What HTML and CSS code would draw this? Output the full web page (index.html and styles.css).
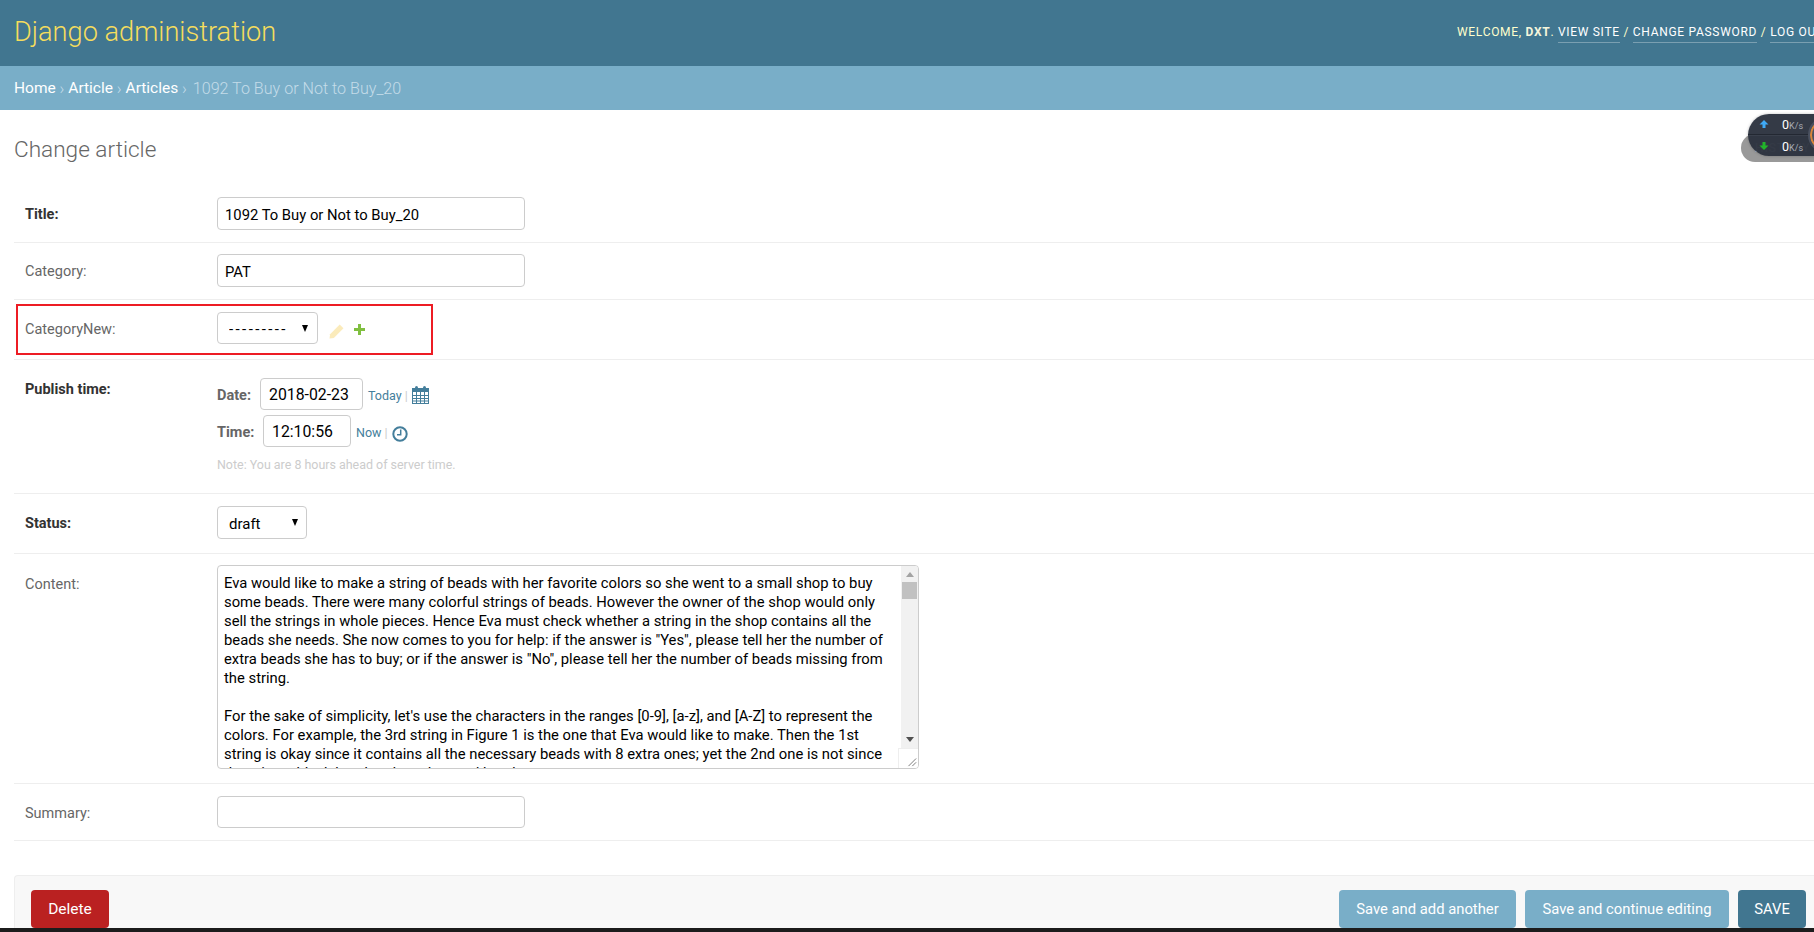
FILE: index.html
```html
<!DOCTYPE html>
<html lang="en">
<head>
<meta charset="utf-8">
<title>Change article</title>
<link rel="stylesheet" href="styles.css">
</head>
<body>
<div class="page">
  <div class="viewport">
    <header class="header">
      <div class="branding">Django administration</div>
      <div class="user-tools">Welcome, <strong>dxt</strong>. <a href="#">View site</a> / <a href="#">Change password</a> / <a href="#">Log out</a></div>
    </header>
    <nav class="breadcrumbs"><a href="#">Home</a> › <a href="#">Article</a> › <a href="#">Articles</a> › <span class="crumb-current">1092 To Buy or Not to Buy_20</span></nav>
    <main class="content">
      <h1 class="page-title">Change article</h1>
      <a class="history" href="#">History</a>
      <div class="speed">
        <div class="speed-row"><svg class="arrow" viewBox="0 0 10 10"><path d="M5 1 9.5 5.5H6.5V9h-3V5.5H.5z" fill="#3fa9f5"/></svg><span class="speed-val"><b>0</b>K/s</span></div>
        <div class="speed-row speed-row-low"><svg class="arrow" viewBox="0 0 10 10"><path d="M5 9 9.5 4.5H6.5V1h-3v3.5H.5z" fill="#22b52a"/></svg><span class="speed-val"><b>0</b>K/s</span></div>
        <div class="speed-ring"></div>
      </div>
      <form class="form">
        <div class="row row-title">
          <label class="label required">Title:</label>
          <input class="field" type="text" value="1092 To Buy or Not to Buy_20">
        </div>
        <div class="row">
          <label class="label">Category:</label>
          <input class="field" type="text" value="PAT">
        </div>
        <div class="row row-cat">
          <label class="label">CategoryNew:</label>
          <span class="select-wrap select-cat"><select class="select"><option>---------</option></select></span>
          <svg class="icon-pencil" viewBox="0 0 14 14"><path d="M10 .5 13.5 4 4.5 13 .5 13.5 1 9.5z" fill="#efb80b" opacity=".28"/></svg>
          <svg class="icon-plus" viewBox="0 0 11 11"><path d="M4 0h3v4h4v3H7v4H4V7H0V4h4z" fill="#80bf40"/></svg>
          <div class="red-box"></div>
        </div>
        <div class="row row-publish">
          <label class="label required">Publish time:</label>
          <div class="datetime">
            <div class="dt-line dt-date">
              <span class="dt-label">Date:</span>
              <input class="dt-input dt-input-date" type="text" value="2018-02-23">
              <span class="dt-short"><a href="#">Today</a> |</span>
              <svg class="icon-cal" viewBox="0 0 17 18"><rect x=".5" y="2.5" width="16" height="15" fill="none" stroke="#447e9b"/><rect x="0" y="2" width="17" height="4" fill="#447e9b"/><path d="M0 9.5h17M0 12.5h17M0 15h17M4.5 6v12M8.5 6v12M12.5 6v12" stroke="#447e9b" fill="none"/><rect x="3" y="0" width="3" height="4" rx="1.5" fill="#447e9b"/><rect x="11" y="0" width="3" height="4" rx="1.5" fill="#447e9b"/></svg>
            </div>
            <div class="dt-line dt-time">
              <span class="dt-label">Time:</span>
              <input class="dt-input dt-input-time" type="text" value="12:10:56">
              <span class="dt-short"><a href="#">Now</a> |</span>
              <svg class="icon-clock" viewBox="0 0 16 16"><circle cx="8" cy="8" r="6.7" fill="none" stroke="#447e9b" stroke-width="2"/><path d="M8.7 3.5v5.2H5" fill="none" stroke="#447e9b" stroke-width="1.5"/></svg>
            </div>
            <div class="note">Note: You are 8 hours ahead of server time.</div>
          </div>
        </div>
        <div class="row row-status">
          <label class="label required">Status:</label>
          <span class="select-wrap select-status"><select class="select"><option>draft</option></select></span>
        </div>
        <div class="row row-content">
          <label class="label">Content:</label>
          <div class="area-wrap">
            <textarea class="area" readonly>Eva would like to make a string of beads with her favorite colors so she went to a small shop to buy some beads. There were many colorful strings of beads. However the owner of the shop would only sell the strings in whole pieces. Hence Eva must check whether a string in the shop contains all the beads she needs. She now comes to you for help: if the answer is "Yes", please tell her the number of extra beads she has to buy; or if the answer is "No", please tell her the number of beads missing from the string.

For the sake of simplicity, let's use the characters in the ranges [0-9], [a-z], and [A-Z] to represent the colors. For example, the 3rd string in Figure 1 is the one that Eva would like to make. Then the 1st string is okay since it contains all the necessary beads with 8 extra ones; yet the 2nd one is not since there is no black bead and one less red bead.</textarea>
            <div class="scrollbar">
              <span class="sb-up"></span>
              <span class="sb-thumb"></span>
              <span class="sb-down"></span>
            </div>
            <svg class="resizer" viewBox="0 0 20 20"><path d="M18 10 10 18M18 14 14 18" stroke="#777" fill="none"/></svg>
          </div>
        </div>
        <div class="row row-summary">
          <label class="label">Summary:</label>
          <input class="field field-summary" type="text">
        </div>
        <div class="submit-row">
          <a class="btn btn-delete" href="#">Delete</a>
          <div class="spacer"></div>
          <a class="btn btn-light" href="#">Save and add another</a>
          <a class="btn btn-light" href="#">Save and continue editing</a>
          <a class="btn btn-dark" href="#">SAVE</a>
        </div>
      </form>
    </main>
  </div>
  <div class="taskbar"></div>
</div>
</body>
</html>
```
FILE: styles.css
```css
* { box-sizing: border-box; }
html, body { margin: 0; padding: 0; height: 100%; overflow: hidden; background: #fff; }
body { font-family: Roboto, "Liberation Sans", sans-serif; font-size: 14px; color: #333; }
a { text-decoration: none; }

.page { height: 100vh; display: flex; flex-direction: column; }
.viewport { flex: 1; min-height: 0; overflow: hidden; position: relative; }
.taskbar { height: 4px; background: #1c1c1c; flex: none; }

.header { height: 66px; background: #417690; display: flex; align-items: center; padding-left: 14px; justify-content: space-between; }
.branding { font-size: 27.2px; font-weight: 300; color: #f5dd5d; white-space: nowrap; margin-top: -3px; }
.user-tools { flex: 0 0 357px; overflow: hidden; white-space: nowrap; font-size: 12px; font-weight: 400; letter-spacing: .7px; text-transform: uppercase; color: #ffc; margin-top: -1px; padding-bottom: 2px; line-height: 18px; }
.user-tools strong { font-weight: 700; color: #f5f5dc; }
.user-tools a { color: #fff; border-bottom: 1px solid rgba(255,255,255,.3); padding-bottom: 3px; }

.breadcrumbs { height: 44px; background: #79aec8; padding-left: 14px; display: flex; align-items: center; white-space: pre; font-size: 16px; font-weight: 300; color: #c4dce8; }
.breadcrumbs a { color: #fff; font-weight: 400; font-size: 15.5px; }
.crumb-current { margin-left: 2px; font-size: 16.1px; }

.content { position: relative; padding-left: 14px; }
.page-title { margin: 0; padding-top: 26px; font-size: 22.6px; font-weight: 300; color: #666; line-height: 28px; height: 76px; }

.history { position: absolute; left: 1741px; top: 24px; width: 120px; height: 28px; border-radius: 14px; background: #999; color: #fff; font-size: 12px; letter-spacing: 1px; text-transform: uppercase; line-height: 28px; padding-left: 14px; }
.speed { position: absolute; left: 1748px; top: 4px; width: 120px; height: 42px; border-radius: 21px; background: rgba(44,50,62,.96); box-shadow: 0 0 3px rgba(0,0,0,.25); }
.speed-row { height: 21px; display: flex; align-items: center; padding-left: 11px; border-bottom: 1px solid #232832; }
.speed-row-low { border-bottom: 0; border-top: 1px solid #3a404c; }
.arrow { width: 10px; height: 10px; flex: none; }
.speed-val { margin-left: 13px; width: 21px; flex: none; white-space: nowrap; font-size: 9px; color: #a8adb5; }
.speed-val b { font-size: 12.5px; font-weight: 400; color: #fff; }
.speed-ring { position: absolute; left: 60px; top: 3px; width: 36px; height: 36px; border-radius: 50%; background: #4a5160; border: 2px solid #4a5160; box-shadow: inset 0 0 0 2px #d9853a; }

.form { display: block; }
.row { position: relative; display: flex; align-items: flex-start; padding: 11px 10px 12px 11px; border-bottom: 1px solid #eee; }
.label { flex: 0 0 192px; font-size: 14.5px; color: #666; padding-top: 10px; line-height: 16px; }
.required { font-weight: 700; color: #333; }

.field { width: 308px; height: 33px; border: 1px solid #ccc; border-radius: 4px; padding: 6px 7px 4px; font: 14.8px Roboto, "Liberation Sans", sans-serif; color: #000; background: #fff; }
.field-summary { height: 32px; }

.row-cat { padding: 12px 10px 15px 11px; align-items: flex-start; }
.select-wrap { position: relative; display: block; height: 32px; }
.select-wrap::after { content: ""; position: absolute; top: 13px; border-left: 3.5px solid transparent; border-right: 3.5px solid transparent; border-top: 7px solid #000; pointer-events: none; }
.select { display: block; width: 100%; height: 100%; appearance: none; -webkit-appearance: none; border: 1px solid #ccc; border-radius: 4px; background: #fff; font: 15px Roboto, "Liberation Sans", sans-serif; color: #000; padding: 2px 11px 0; }
.select-cat { width: 101px; }
.select-cat .select { letter-spacing: 2.4px; }
.select-cat::after { right: 10px; }
.select-status { width: 90px; height: 33px; }
.select-status::after { right: 9px; }
.icon-pencil { width: 15px; height: 15px; margin: 12px 0 0 11px; flex: none; }
.icon-plus { width: 11px; height: 11px; margin: 12px 0 0 10px; flex: none; }
.red-box { position: absolute; left: 2px; top: 4px; width: 417px; height: 51px; border: 2px solid #ed1c24; pointer-events: none; }

.row-publish { padding: 18px 10px 21px 11px; }
.row-publish .label { padding-top: 4px; }
.datetime { display: flex; flex-direction: column; }
.dt-line { display: flex; align-items: center; height: 32px; }
.dt-time { margin-top: 5px; }
.dt-label { font-weight: 700; color: #666; font-size: 14.5px; flex: none; padding-top: 2px; }
.dt-date .dt-label { width: 43px; }
.dt-time .dt-label { width: 46px; }
.dt-input { height: 32px; border: 1px solid #ccc; border-radius: 4px; padding: 5px 8px; font: 15.8px Roboto, "Liberation Sans", sans-serif; color: #000; background: #fff; }
.dt-input-date { width: 103px; }
.dt-input-time { width: 88px; }
.dt-short { margin-left: 5px; font-size: 12.5px; color: #ccc; white-space: pre; padding-top: 2px; }
.dt-short a { color: #447e9b; }
.icon-cal { width: 17px; height: 18px; margin-left: 4px; flex: none; margin-top: 2px; }
.icon-clock { width: 16px; height: 16px; margin-left: 4px; flex: none; margin-top: 5px; }
.note { margin-top: 11px; font-size: 12.45px; font-weight: 400; color: #ccc; line-height: 14px; }

.row-status { padding: 12px 10px 14px 11px; }
.row-content { padding-bottom: 14px; }
.row-content .label { padding-top: 12px; }
.row-summary { padding: 12px 10px 12px 11px; }

.area-wrap { position: relative; width: 702px; height: 204px; }
.area { display: block; width: 100%; height: 100%; resize: none; overflow: hidden; border: 1px solid #ccc; border-radius: 4px; padding: 8px 27px 0 6px; font: 14.8px/19px Roboto, "Liberation Sans", sans-serif; color: #000; background: #fff; outline: 0; }
.scrollbar { position: absolute; right: 1px; top: 1px; bottom: 21px; width: 17px; background: #f1f1f1; display: flex; flex-direction: column; align-items: center; border-top-right-radius: 3px; }
.sb-up, .sb-down { width: 0; height: 0; border-left: 4.5px solid transparent; border-right: 4.5px solid transparent; }
.sb-up { border-bottom: 5px solid #a3a3a3; margin-top: 6px; }
.sb-thumb { width: 15px; height: 17px; background: #c1c1c1; margin-top: 5px; }
.sb-down { border-top: 5px solid #505050; margin-top: auto; margin-bottom: 6px; }
.resizer { position: absolute; right: 1px; bottom: 1px; width: 20px; height: 20px; background: #fff; border-left: 1px solid #eee; border-top: 1px solid #eee; border-bottom-right-radius: 3px; }

.submit-row { margin-top: 34px; height: 70px; display: flex; align-items: flex-start; padding: 14px 8px 0 16px; background: #f8f8f8; border: 1px solid #eee; border-right: 0; border-radius: 4px 0 0 4px; }
.spacer { flex: 1; }
.btn { display: block; height: 38px; border-radius: 4px; color: #fff; font-size: 14.8px; line-height: 38px; text-align: center; white-space: nowrap; margin-left: 9px; }
.btn-delete { width: 78px; margin-left: 0; background: #ba2121; font-size: 15.5px; }
.btn-light { background: #79aec8; }
.btn-light:nth-of-type(2) { width: 177px; }
.btn-light:nth-of-type(3) { width: 204px; }
.btn-dark { width: 68px; background: #417690; }
```
